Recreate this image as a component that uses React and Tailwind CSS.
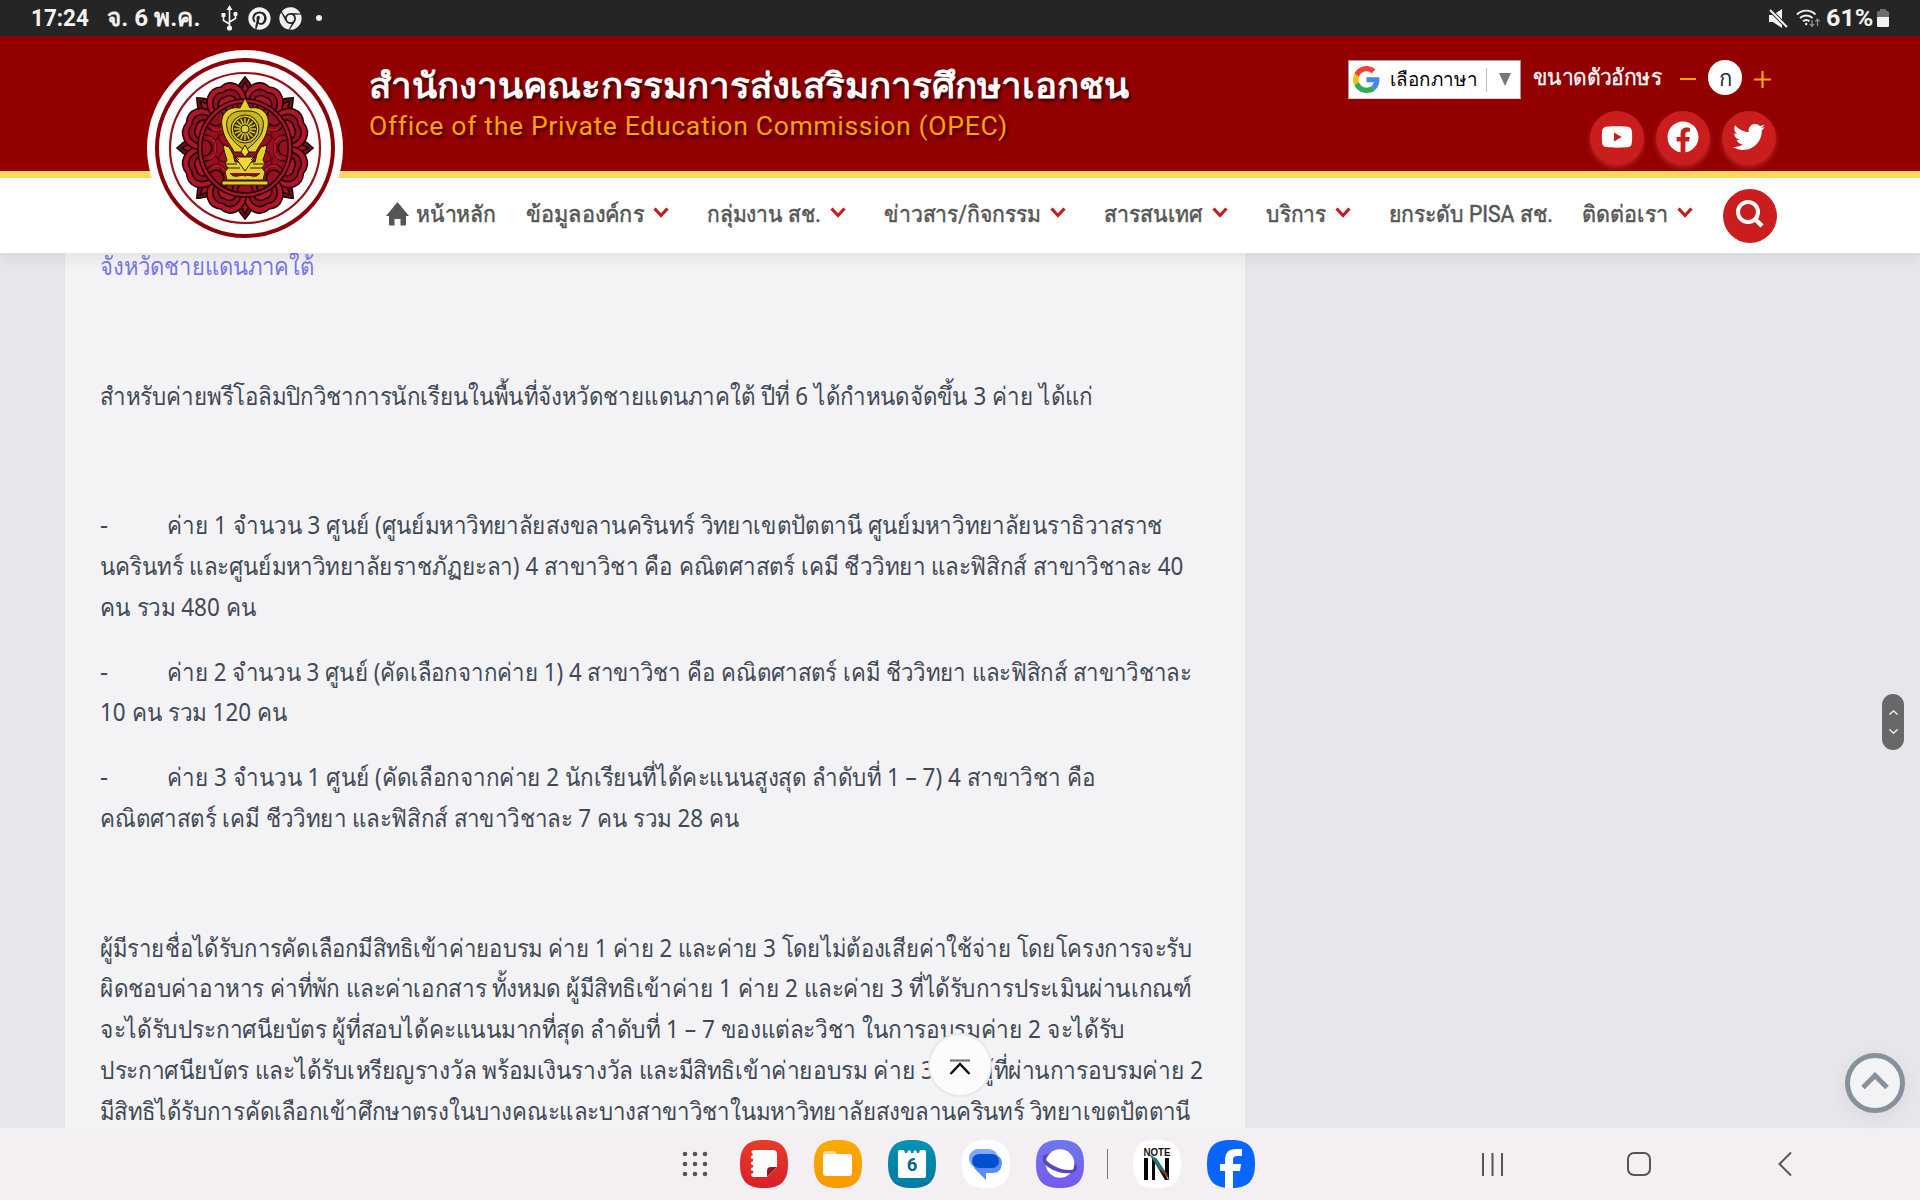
import { useLayoutEffect, useRef, useState } from 'react';
import { FaYoutube, FaFacebook, FaTwitter, FaPinterest, FaChrome } from 'react-icons/fa';

const NAV_ITEMS = [
  { label: 'ข้อมูลองค์กร', width: 118, arrow: true, pad: 'ml-[30px]' },
  { label: 'กลุ่มงาน สช.', width: 114, arrow: true, pad: 'ml-[38px]' },
  { label: 'ข่าวสาร/กิจกรรม', width: 157, arrow: true, pad: 'ml-[38px]' },
  { label: 'สารสนเทศ', width: 99, arrow: true, pad: 'ml-[38px]' },
  { label: 'บริการ', width: 60, arrow: true, pad: 'ml-[38px]' },
  { label: 'ยกระดับ PISA สช.', width: 164, arrow: false, pad: 'ml-[38px]' },
  { label: 'ติดต่อเรา', width: 86, arrow: true, pad: 'ml-[29px]' },
];

const PARAGRAPHS = [
  [{ text: 'สำหรับค่ายพรีโอลิมปิกวิชาการนักเรียนในพื้นที่จังหวัดชายแดนภาคใต้ ปีที่ 6 ได้กำหนดจัดขึ้น 3 ค่าย ได้แก่', width: 993 }],
  [],
  [
    { text: 'ค่าย 1 จำนวน 3 ศูนย์ (ศูนย์มหาวิทยาลัยสงขลานครินทร์ วิทยาเขตปัตตานี ศูนย์มหาวิทยาลัยนราธิวาสราช', width: 996, dash: true },
    { text: 'นครินทร์ และศูนย์มหาวิทยาลัยราชภัฏยะลา) 4 สาขาวิชา คือ คณิตศาสตร์ เคมี ชีววิทยา และฟิสิกส์ สาขาวิชาละ 40', width: 1083 },
    { text: 'คน รวม 480 คน', width: 156 },
  ],
  [
    { text: 'ค่าย 2 จำนวน 3 ศูนย์ (คัดเลือกจากค่าย 1) 4 สาขาวิชา คือ คณิตศาสตร์ เคมี ชีววิทยา และฟิสิกส์ สาขาวิชาละ', width: 1024, dash: true },
    { text: '10 คน รวม 120 คน', width: 188 },
  ],
  [
    { text: 'ค่าย 3 จำนวน 1 ศูนย์ (คัดเลือกจากค่าย 2 นักเรียนที่ได้คะแนนสูงสุด ลำดับที่ 1 – 7) 4 สาขาวิชา คือ', width: 928, dash: true },
    { text: 'คณิตศาสตร์ เคมี ชีววิทยา และฟิสิกส์ สาขาวิชาละ 7 คน รวม 28 คน', width: 639 },
  ],
  [],
  [
    { text: 'ผู้มีรายชื่อได้รับการคัดเลือกมีสิทธิเข้าค่ายอบรม ค่าย 1 ค่าย 2 และค่าย 3 โดยไม่ต้องเสียค่าใช้จ่าย โดยโครงการจะรับ', width: 1092 },
    { text: 'ผิดชอบค่าอาหาร ค่าที่พัก และค่าเอกสาร ทั้งหมด ผู้มีสิทธิเข้าค่าย 1 ค่าย 2 และค่าย 3 ที่ได้รับการประเมินผ่านเกณฑ์', width: 1092 },
    { text: 'จะได้รับประกาศนียบัตร ผู้ที่สอบได้คะแนนมากที่สุด ลำดับที่ 1 – 7 ของแต่ละวิชา ในการอบรมค่าย 2 จะได้รับ', width: 1025 },
    { text: 'ประกาศนียบัตร และได้รับเหรียญรางวัล พร้อมเงินรางวัล และมีสิทธิเข้าค่ายอบรม ค่าย 3 และผู้ที่ผ่านการอบรมค่าย 2', width: 1103 },
    { text: 'มีสิทธิได้รับการคัดเลือกเข้าศึกษาตรงในบางคณะและบางสาขาวิชาในมหาวิทยาลัยสงขลานครินทร์ วิทยาเขตปัตตานี', width: 1091 },
  ],
];

// Single line of text squeezed or stretched to a known width
function Fit({ width, className = '', children }) {
  const ref = useRef(null);
  const [scale, setScale] = useState(1);

  useLayoutEffect(() => {
    const measure = () => setScale(width / ref.current.offsetWidth);
    measure();
    document.fonts?.ready.then(() => ref.current && measure());
  }, [width]);

  return (
    <span className={`inline-block whitespace-nowrap ${className}`} style={{ width }}>
      <span ref={ref} className="inline-block origin-left" style={{ transform: `scaleX(${scale})` }}>
        {children}
      </span>
    </span>
  );
}

function StatusBar() {
  return (
    <div className="h-9 shrink-0 bg-[#252525] text-[#f2f2f2] flex items-center justify-between pl-[31px] pr-[31px] font-['Roboto','Noto_Sans',sans-serif]">
      <div className="flex items-center">
        <Fit width={58} className="text-2xl leading-9 font-bold">17:24</Fit>
        <Fit width={94} className="ml-[18px] text-2xl leading-9 font-bold">จ. 6 พ.ค.</Fit>
        <svg className="ml-[20px]" width="17" height="26" viewBox="0 0 17 26" fill="none" stroke="currentColor" strokeWidth="1.6">
          <path d="M8.5 4v18M8.5 19 2.5 15.500V10M8.500 17l6-3.500V9" />
          <path d="M8.500 0l3 5h-6zM.500 8h4v4h-4z" fill="currentColor" stroke="none" />
          <circle cx="14.500" cy="9" r="2.200" fill="currentColor" stroke="none" />
          <circle cx="8.500" cy="23" r="2.600" fill="currentColor" stroke="none" />
        </svg>
        <FaPinterest className="ml-[10px] size-[23px]" />
        <FaChrome className="ml-2 size-[23px]" />
        <span className="ml-[14px] size-1.5 rounded-full bg-current" />
      </div>
      <div className="flex items-center">
        <svg width="19" height="19" viewBox="0 0 19 19" fill="currentColor">
          <path d="M0 6h4l9-6v19L4 13H0z" />
          <path d="M1 1l17 17" stroke="#252525" strokeWidth="4" />
          <path d="M1 1l17 17" stroke="currentColor" strokeWidth="2" />
        </svg>
        <svg className="ml-2" width="25" height="20" viewBox="0 0 25 20" fill="none" stroke="currentColor" strokeWidth="1.900">
          <path d="M1 6.500a13 13 0 0 1 18.500 0M4 10a9 9 0 0 1 12.500 0M7 13.300a5 5 0 0 1 6.500 0" />
          <circle cx="10.200" cy="16" r="1.200" fill="currentColor" stroke="none" />
          <path d="M16 12v6m-2-2 2 2.500 2-2.500M21.500 18v-6.500m-2 2 2-2.500 2 2.500" stroke="#8a8a8a" strokeWidth="1.300" />
        </svg>
        <Fit width={47} className="ml-[5px] text-2xl leading-9 font-bold">61%</Fit>
        <svg className="ml-1" width="12" height="18" viewBox="0 0 12 18">
          <path d="M3 0h6v2h1.500A1.500 1.500 0 0 1 12 3.500V9H0V3.500A1.500 1.500 0 0 1 1.500 2H3z" fill="#6e6e6e" />
          <path d="M0 8h12v8.500a1.500 1.500 0 0 1-1.500 1.500h-9A1.500 1.500 0 0 1 0 16.500z" fill="currentColor" />
        </svg>
      </div>
    </div>
  );
}

function Emblem() {
  const petals = [0, 45, 90, 135, 180, 225, 270, 315];
  return (
    <svg className="absolute left-[147px] top-[14px] z-10" width="196" height="196" viewBox="-98 -98 196 196">
      <circle r="98" fill="#fff" />
      <circle r="88" fill="none" stroke="#8c0008" strokeWidth="4" />
      <circle r="75" fill="none" stroke="#96101a" strokeWidth="2.200" />
      <g transform="scale(0.96 1)">
        <g stroke="#1d0608" strokeWidth="1.600">
          {petals.map((a) => (
            <g key={a} transform={`rotate(${a})`}>
              <path d="M0-71C4-66 8-63 9-56L0-40-9-56C-8-63-4-66 0-71Z" fill="#6d0f18" />
              <path d="M0-66 4-58 0-50-4-58Z" fill="#a41424" />
            </g>
          ))}
          {petals.map((a) => (
            <g key={a} transform={`rotate(${a + 22.5})`}>
              <path d="M-19-40C-25-60-12-70 0-66C12-70 25-60 19-40L0-26Z" fill="#b3142a" />
              <path d="M-14-42C-18-57-8-63 0-60C8-63 18-57 14-42" fill="#8f1020" />
              <path d="M-9-43C-12-53-5-56 0-55C5-56 12-53 9-43" fill="#b3142a" />
              <path d="M-4-44C-5-49 5-49 4-44" fill="#7d0d1a" />
            </g>
          ))}
          <circle r="49" fill="#b3142a" />
          <circle r="45" fill="#97101f" />
          {petals.map((a) => (
            <g key={a} transform={`rotate(${a})`} fill="none">
              <path d="M-13-42C-13-26 13-26 13-42M-8-43C-8-32 8-32 8-43" />
              <path d="M-12-14C-18-26-8-32 0-34C8-32 18-26 12-14" stroke="#5d0a14" />
              <path d="M-11-38C-10-28 10-28 11-38" stroke="#c41830" />
            </g>
          ))}
        </g>
      </g>
      {/* Throne and wheel */}
      <g stroke="#231a08" strokeWidth="1" fill="#e6cf2c">
        <path d="M0-50 3-44 5-40C17-42 25-34 23-22C21-8 14-4 11 4H-11C-14-4-21-8-23-22C-25-34-17-42-5-40L-3-44Z" />
        <path d="M0-37C14-38 20-30 18-20C16-9 8-4 0 3C-8-4-16-9-18-20C-20-30-14-38 0-37Z" fill="#c9b51f" />
        <circle cy="-19" r="14" />
        <circle cy="-19" r="11.500" fill="#3c3310" />
        {[0, 22.5, 45, 67.5, 90, 112.5, 135, 157.5].map((a) => (
          <path key={a} d="M-11 0H11" transform={`translate(0 -19) rotate(${a})`} stroke="#e6cf2c" strokeWidth="1.400" />
        ))}
        <circle cy="-19" r="4" />
        <path d="M-22-3-16-1-12 6-10 14H10L12 6 16-1 22-3 20 6 18 12 20 16 17 20 20 24 18 32H-18L-20 24-17 20-20 16-18 12-20 6Z" />
        <path d="M-10 9H10L0 23ZM0-3 4 4 0 9-4 4Z" fill="#f2d83a" />
        <path d="M-19 16H-8M-17 20H-5M8 16H19M5 20H17M-12 6-6 12M12 6 6 12" fill="none" />
        <path d="M-15 25C-10 32-4 25 0 28C4 25 10 32 15 25" fill="#8d1020" />
        <path d="M-23 33H23V37H-23Z" />
      </g>
    </svg>
  );
}

function GoogleMark() {
  return (
    <svg width="27" height="27" viewBox="0 0 48 48">
      <path fill="#ea4335" d="M24 9.500c3.540 0 6.710 1.220 9.210 3.600l6.850-6.850C35.900 2.380 30.470 0 24 0 14.620 0 6.510 5.380 2.560 13.220l7.980 6.190C12.430 13.720 17.740 9.500 24 9.500z" />
      <path fill="#4285f4" d="M46.980 24.550c0-1.570-.15-3.090-.38-4.550H24v9.020h12.940c-.58 2.960-2.260 5.480-4.780 7.180l7.730 6c4.510-4.180 7.090-10.360 7.090-17.650z" />
      <path fill="#fbbc05" d="M10.530 28.590c-.48-1.450-.76-2.990-.76-4.590s.27-3.140.76-4.590l-7.980-6.190C.92 16.460 0 20.120 0 24c0 3.880.92 7.540 2.560 10.780l7.970-6.190z" />
      <path fill="#34a853" d="M24 48c6.480 0 11.930-2.130 15.890-5.810l-7.730-6c-2.150 1.450-4.920 2.300-8.160 2.300-6.260 0-11.570-4.220-13.470-9.910l-7.980 6.190C6.510 42.620 14.620 48 24 48z" />
    </svg>
  );
}

function SocialButton({ icon: Icon }) {
  return (
    <span className="size-[54px] rounded-full bg-[#c91d1e] text-white flex items-center justify-center pb-0.5 shadow-[0_3px_5px_rgba(210,80,80,0.45)]">
      <Icon className="size-8" />
    </span>
  );
}

function Banner() {
  return (
    <div className="h-[142px] bg-[#930000] border-b-[7px] border-[#ffdd60] flex justify-between pl-[369px] pr-36">
      <div className="flex flex-col pt-[23px]">
        <Fit width={760} className="h-[52px] text-[35px] leading-[52px] font-bold text-white [text-shadow:2px_3px_3px_rgba(0,0,0,0.6)]">
          สำนักงานคณะกรรมการส่งเสริมการศึกษาเอกชน
        </Fit>
        <Fit width={639} className="h-8 text-[25px] leading-8 tracking-wide font-['Roboto',sans-serif] text-[#ff9f0a] [text-shadow:2px_3px_3px_rgba(0,0,0,0.6)]">
          Office of the Private Education Commission (OPEC)
        </Fit>
      </div>
      <div className="flex flex-col items-end pt-6">
        <div className="flex items-start pr-[5px]">
          <div className="w-[173px] h-[39px] bg-white border border-[#9b9b9b] border-b-[#d5d5d5] flex items-center pl-1">
            <GoogleMark />
            <Fit width={88} className="ml-2.5 text-[19px] text-black">เลือกภาษา</Fit>
            <span className="ml-2 h-6 w-px bg-[#bbb]" />
            <svg className="ml-3" width="12" height="13" viewBox="0 0 12 13">
              <path d="M0 0h12L6 13z" fill="#767676" />
            </svg>
          </div>
          <Fit width={129} className="ml-3 h-[35px] leading-[33px] text-[22px] text-white [-webkit-text-stroke:0.3px]">ขนาดตัวอักษร</Fit>
          <span className="ml-[18px] mt-[18px] h-0.5 w-4 bg-[#ffa800]" />
          <span className="ml-3 w-[34px] h-[35px] rounded-full bg-white text-[#1b2a3f] text-[22px] leading-[35px] text-center">ก</span>
          <svg className="ml-3 mt-[11px]" width="17" height="17" viewBox="0 0 17 17">
            <path d="M8.500 0v17M0 8.500h17" stroke="#ffa800" strokeWidth="2.200" />
          </svg>
        </div>
        <div className="mt-3 flex gap-3">
          <SocialButton icon={FaYoutube} />
          <SocialButton icon={FaFacebook} />
          <SocialButton icon={FaTwitter} />
        </div>
      </div>
    </div>
  );
}

function NavBar() {
  return (
    <nav className="h-[75px] bg-white flex items-center pl-[386px] text-[23px] text-[#555] shadow-[0_4px_16px_rgba(0,0,0,0.08)] font-['Roboto','Noto_Sans',sans-serif]">
      <svg className="-mt-1" width="23" height="24" viewBox="0 0 23 24" fill="#555">
        <path d="M11.500 0 23 14h-3v8.500a1 1 0 0 1-1 1h-4.500V17h-6v6.500H4a1 1 0 0 1-1-1V14H0z" />
      </svg>
      <Fit width={80} className="ml-[7px] [-webkit-text-stroke:0.5px]">หน้าหลัก</Fit>
      {NAV_ITEMS.map((item) => (
        <div key={item.label} className={`flex items-center ${item.pad}`}>
          <Fit width={item.width} className="[-webkit-text-stroke:0.5px]">{item.label}</Fit>
          {item.arrow && (
            <svg className="ml-[9px] -mt-1.5" width="16" height="11" viewBox="0 0 16 11" fill="none">
              <path d="M1.500 1.500 8 8.500l6.500-7" stroke="#c41c1e" strokeWidth="3.200" />
            </svg>
          )}
        </div>
      ))}
      <span className="ml-[30px] size-[54px] rounded-full bg-[#c91d1e] flex items-center justify-center pb-1">
        <svg width="28" height="28" viewBox="0 0 28 28" fill="none" stroke="#fff">
          <circle cx="12" cy="12" r="10" strokeWidth="4" />
          <path d="M18.500 18.500 26 26" strokeWidth="4.500" />
        </svg>
      </span>
    </nav>
  );
}

function Article() {
  return (
    <main className="h-[875px] overflow-hidden bg-[#e6e6eb] pl-[65px]">
      <article className="flow-root w-[1180px] h-full bg-[#f3f3f5] pl-[35px] text-[25px] leading-[40.8px] text-[#414956]">
        <p className="-mt-[8px] h-[40.8px] text-[#7775ef]">
          <Fit width={214}>จังหวัดชายแดนภาคใต้</Fit>
        </p>
        <p className="mt-6 h-[40.8px]" />
        {PARAGRAPHS.map((lines, i) => (
          <div key={i} className="mt-6 min-h-[40.8px]">
            {lines.map((line) => (
              <div key={line.text} className="h-[40.8px] flex">
                {line.dash && <span className="w-[67px]">-</span>}
                <Fit width={line.width}>{line.text}</Fit>
              </div>
            ))}
          </div>
        ))}
      </article>
    </main>
  );
}

function FloatingButtons() {
  return (
    <>
      <div className="absolute left-[928px] top-[1033px] size-16 rounded-full bg-[#fcfcfc] border-2 border-[#e9e9eb] flex items-center justify-center pt-1">
        <svg width="22" height="16" viewBox="0 0 22 16" fill="none">
          <path d="M1 1.500h20" stroke="#777" strokeWidth="2.200" />
          <path d="M1.500 15 11 5l9.500 10" stroke="#111" strokeWidth="2.500" />
        </svg>
      </div>
      <div className="absolute left-[1882px] top-[694px] w-[22px] h-14 rounded-full bg-[#686868] flex flex-col items-center justify-between py-4">
        <svg width="9" height="5" viewBox="0 0 9 5" fill="none" stroke="#fff" strokeWidth="1.200">
          <path d="M.5 4.500 4.500.8l4 3.700" />
        </svg>
        <svg width="9" height="5" viewBox="0 0 9 5" fill="none" stroke="#fff" strokeWidth="1.200">
          <path d="M.5.5l4 3.700 4-3.700" />
        </svg>
      </div>
      <div className="absolute left-[1845px] top-[1053px] size-[60px] rounded-full bg-[#f3f3f5] border-[5px] border-[#87919b] shadow-[0_4px_20px_rgba(0,0,0,0.06)] flex items-center justify-center pb-1.5">
        <svg width="28" height="17" viewBox="0 0 28 17" fill="none" stroke="#87919b" strokeWidth="5">
          <path d="M2 15.500 14 3.500l12 12" />
        </svg>
      </div>
    </>
  );
}

const SQUIRCLE = 'M24 0C41 0 48 7 48 24S41 48 24 48 0 41 0 24 7 0 24 0Z';

function AppIcon({ className, fill, children }) {
  return (
    <svg className={className} width="48" height="48" viewBox="0 0 48 48">
      <path d={SQUIRCLE} fill={fill} />
      {children}
    </svg>
  );
}

function Dock() {
  return (
    <div className="h-[72px] bg-[#f4eff3] flex items-center pl-[682px]">
      <svg width="26" height="26" viewBox="-13 -13 26 26" fill="#555">
        {[-10, 0, 10].map((y) => [-10, 0, 10].map((x) => <circle key={`${x}${y}`} cx={x} cy={y} r="2.300" />))}
      </svg>
      <svg width="0" height="0">
        <defs>
          <linearGradient id="notes" x2="0" y2="1"><stop stopColor="#e73c28" /><stop offset="1" stopColor="#da1f26" /></linearGradient>
          <linearGradient id="files" x2="0" y2="1"><stop stopColor="#f7ab00" /><stop offset="1" stopColor="#fb9800" /></linearGradient>
          <linearGradient id="cal" x2="0" y2="1"><stop stopColor="#0093b2" /><stop offset="1" stopColor="#007ba3" /></linearGradient>
          <linearGradient id="web" x2="0" y2="1"><stop stopColor="#6e78ec" /><stop offset="1" stopColor="#7459ef" /></linearGradient>
        </defs>
      </svg>
      <AppIcon className="ml-[32px]" fill="url(#notes)">
        <path d="M14 10H33Q37 10 37 14V27L27 37H14Q11 37 11 34Q14 33.500 13 31Q10 31 11 28Q14 27.500 13 25Q10 25 11 22Q14 21.500 13 19Q10 19 11 16Q14 15.500 12 13Q10 11 14 10Z" fill="#fbfbfb" />
        <path d="M37 27H31Q27 27 27 31V37Z" fill="#9d1319" />
      </AppIcon>
      <AppIcon className="ml-[26px]" fill="url(#files)">
        <path d="M9 19V13Q9 11 11 11H20Q22 11 23 14V19Z" fill="#fdd58b" />
        <rect x="9" y="14" width="29" height="22" rx="3" fill="#fff" />
      </AppIcon>
      <AppIcon className="ml-[26px]" fill="url(#cal)">
        <path d="M10 12Q10 10 12 10H16L17 13H19L20 10.500H22.500L23 13H25.500L26 10.500H28L29 13H31L32 10H36Q38 10 38 12V36Q38 38 36 38H12Q10 38 10 36Z" fill="#fff" />
        <text x="24" y="31" textAnchor="middle" fontFamily="Roboto" fontWeight="700" fontSize="18.500" fill="#06677f">6</text>
      </AppIcon>
      <AppIcon className="ml-[26px]" fill="#fff">
        <rect x="7" y="9" width="29" height="19" rx="9" fill="#83a8fb" />
        <path d="M17 15H33Q40 16 40 23.500Q39 33 31 33H24V40L12 28Z" fill="#5a8bf8" />
        <rect x="10" y="14" width="27" height="14" rx="7" fill="#0050cf" />
      </AppIcon>
      <AppIcon className="ml-[26px]" fill="url(#web)">
        <ellipse cx="24" cy="23" rx="18" ry="7.500" transform="rotate(20 24 23)" fill="#5b47bd" />
        <circle cx="24" cy="23.500" r="14.300" fill="#fff" />
        <path d="M7 16C12 25 28 33 41 29L39 32C27 36 13 30 7 22Z" fill="#5b47bd" />
      </AppIcon>
      <span className="ml-[23px] h-[30px] w-px bg-[#777]" />
      <AppIcon className="ml-[25px]" fill="#fff">
        <text x="24" y="15.500" textAnchor="middle" fontFamily="Liberation Sans" fontWeight="700" fontSize="10" textLength="27" lengthAdjust="spacingAndGlyphs" fill="#111">NOTE</text>
        <path d="M11 18h4v22h-4zM19 18h3v22h-3zM32 18h4v22h-4z" fill="#050505" />
        <path d="M19 18h4l13 22h-4z" fill="#111" />
        <path d="M16 14 24 19 34 34 26 29Z" fill="#267078" />
        <path d="M25 28 34 33 35 38Z" fill="#8a3038" />
        <path d="M33 35 37 40 34 39Z" fill="#d9924d" />
      </AppIcon>
      <AppIcon className="ml-[26px]" fill="#0865fe">
        <path d="M18 48V31H13V24H18V20Q18 9 29 9H35V16H30Q26 16 26 20V24H34L33 31H26V48Z" fill="#fff" />
      </AppIcon>
      <svg className="ml-[227px]" width="21" height="23" viewBox="0 0 21 23" stroke="#555" strokeWidth="2">
        <path d="M1 0v23M10.500 0v23M20 0v23" />
      </svg>
      <svg className="ml-[124px]" width="24" height="24" viewBox="0 0 24 24" fill="none" stroke="#555" strokeWidth="2">
        <rect x="1" y="1" width="22" height="22" rx="6" />
      </svg>
      <svg className="ml-[127px]" width="14" height="24" viewBox="0 0 14 24" fill="none" stroke="#555" strokeWidth="2">
        <path d="M13 .5 1.500 12 13 23.500" />
      </svg>
    </div>
  );
}

export default function App() {
  return (
    <div className="relative w-[1920px] h-[1200px] overflow-hidden flex flex-col font-['Noto_Sans',sans-serif]">
      <StatusBar />
      <header className="relative z-10">
        <Emblem />
        <Banner />
        <NavBar />
      </header>
      <Article />
      <Dock />
      <FloatingButtons />
    </div>
  );
}
